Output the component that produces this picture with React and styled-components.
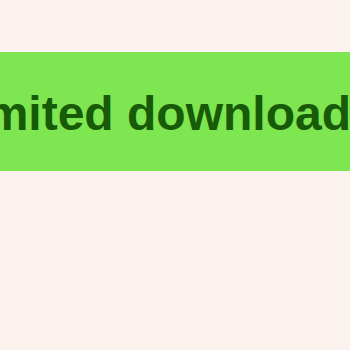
import React from "react";
import styled, { createGlobalStyle } from "styled-components";

const Global = createGlobalStyle`
  html, body { margin: 0; padding: 0; background: #fdf3ee; }
  body { width: 350px; height: 350px; overflow: hidden; }
`;

const Page = styled.div`
  width: 350px;
  height: 350px;
  padding-top: 52px;
  box-sizing: border-box;
  overflow: hidden;
`;

const Banner = styled.div`
  height: 119px;
  padding-top: 3px;
  box-sizing: border-box;
  background: #7ee650;
  display: flex;
  align-items: center;
  overflow: hidden;
`;

const Label = styled.span`
  margin-left: -105px;
  white-space: nowrap;
  font-family: "Liberation Sans", Arial, sans-serif;
  font-weight: 700;
  font-size: 48px;
  color: #175a08;
`;

export default function App() {
  return (
    <>
      <Global />
      <Page>
        <Banner>
          <Label>Unlimited downloads</Label>
        </Banner>
      </Page>
    </>
  );
}
